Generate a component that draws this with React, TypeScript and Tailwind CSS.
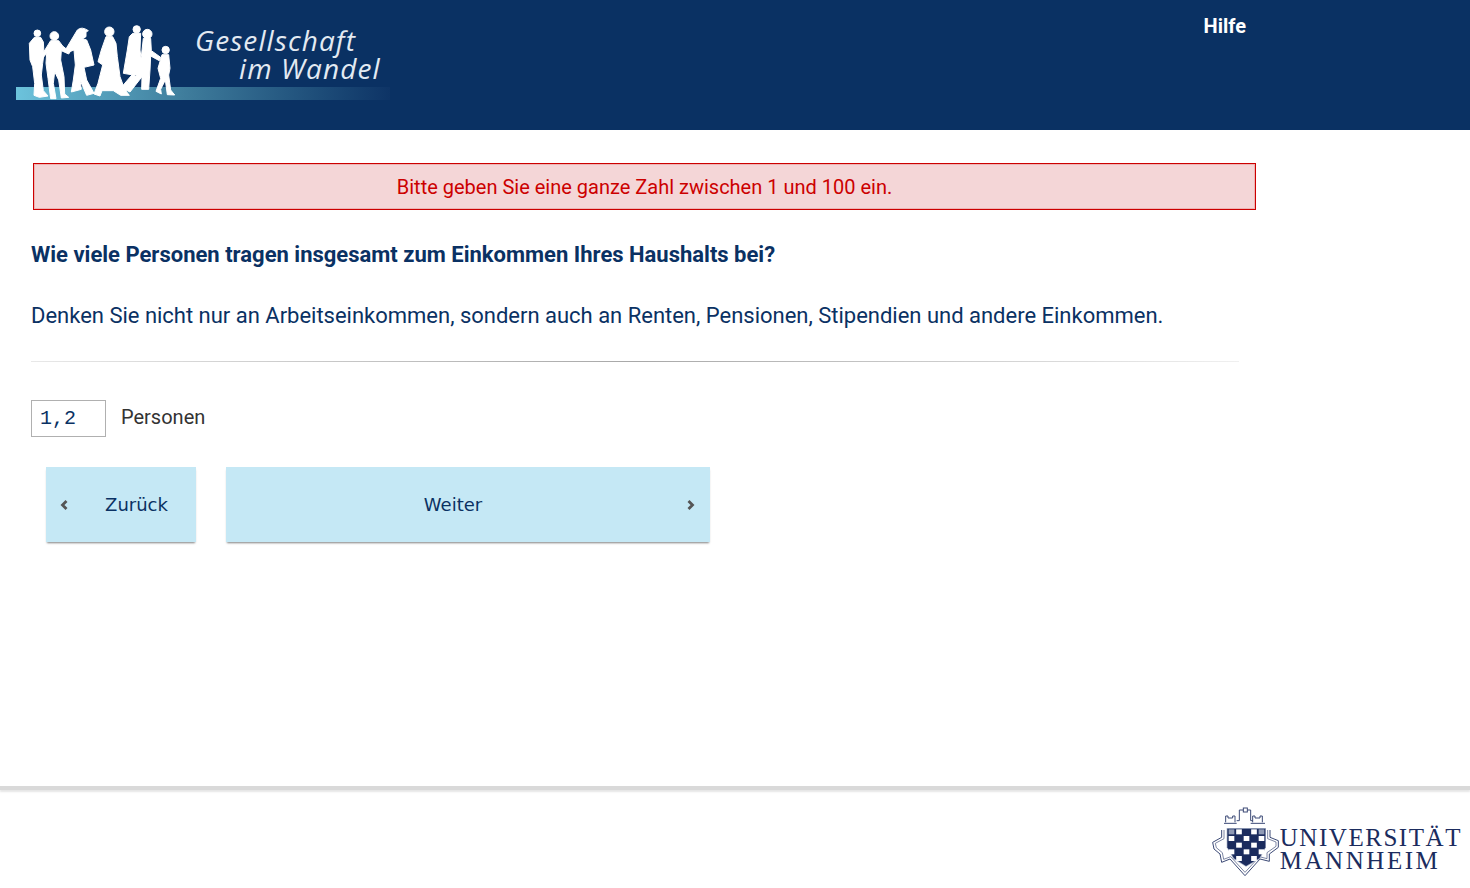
function Walkers() {
  return (
    <svg viewBox="0 0 1200 300" className="absolute left-0 top-0 w-[400px] h-[100px]">
      <g fill="#ffffff" stroke="#ffffff" strokeWidth="3" strokeLinejoin="round">
        <g transform="translate(60 60)">
          <circle cx="52" cy="40" r="10" />
          <path d="M43 52 L62 52 L70 66 L72 100 L68 130 L64 165 L70 212 L84 228 L58 232 L42 226 L44 190 L38 140 L30 120 L28 70 Z" />
          <circle cx="103" cy="48" r="13" />
          <path d="M92 62 L116 62 L128 78 L150 96 L146 102 L124 92 L122 120 L132 170 L134 222 L146 232 L124 234 L116 180 L104 155 L100 190 L108 236 L92 236 L84 175 L78 130 L80 100 L70 112 L66 104 Z" />
          <path d="M172 30 Q185 18 205 32 L198 36 L198 50 L188 56 L200 60 L212 90 L222 135 L192 142 L200 180 L222 220 L200 226 L180 180 L184 208 L154 216 L160 180 L166 135 L162 90 L142 98 L136 90 Z" />
        </g>
        <g transform="translate(270 60)">
          <circle cx="58" cy="35" r="14" />
          <path d="M48 50 L68 50 L78 70 L82 110 L90 170 L104 208 L118 226 L92 226 L70 212 L36 212 L30 228 L12 222 L24 190 L38 135 L24 125 L34 90 Z" />
          <circle cx="140" cy="28" r="11" />
          <path d="M128 40 L152 40 L150 90 L160 165 L130 165 L100 160 L112 90 L118 50 Z" />
          <path d="M130 160 L100 195 L92 215 L105 215 L140 175 Z" />
          <circle cx="172" cy="42" r="14" />
          <path d="M160 55 L182 55 L184 92 L212 112 L208 122 L182 108 L180 150 L176 208 L155 208 L156 170 L120 216 L108 210 L140 165 L154 110 Z" />
          <circle cx="227" cy="90" r="11" />
          <path d="M216 104 L236 104 L240 145 L236 165 L242 210 L254 225 L232 224 L226 180 L212 208 L214 222 L198 214 L212 175 L204 145 Z" />
        </g>
      </g>
    </svg>
  );
}

const crestCells: [number, number, string][] = [
  [0, 0, "#8f9ab5"], [1, 0, "#ffffff"], [2, 0, "#1b2c5e"], [3, 0, "#ffffff"], [4, 0, "#8f9ab5"],
  [0, 1, "#ffffff"], [1, 1, "#1b2c5e"], [2, 1, "#ffffff"], [3, 1, "#1b2c5e"], [4, 1, "#ffffff"],
  [0, 2, "#1b2c5e"], [1, 2, "#ffffff"], [2, 2, "#1b2c5e"], [3, 2, "#ffffff"], [4, 2, "#1b2c5e"],
  [0, 3, "#ffffff"], [1, 3, "#1b2c5e"], [2, 3, "#ffffff"], [3, 3, "#1b2c5e"], [4, 3, "#ffffff"],
  [1, 4, "#ffffff"], [2, 4, "#1b2c5e"], [3, 4, "#ffffff"],
];

function Crest() {
  return (
    <svg viewBox="0 0 210 225" className="w-[70px] h-[75px] shrink-0">
      <g fill="none" stroke="#3c4a76" strokeWidth="3">
        <path d="M47 55 V36 H54 V42 H68 V36 H75 V55 M42 58 H80" />
        <path d="M128 55 V36 H135 V42 H150 V36 H157 V55 M122 58 H165" />
        <path d="M80 50 H88 V18 H100 M112 18 H122 V50 H128" />
        <rect x="100" y="12" width="12" height="12" />
        <path d="M35 78 V100 L8 115 L12 135 L30 150 L35 175 L60 165 L105 215 L150 165 L178 172 L178 150 L205 130 L205 110 L180 100 V78" />
        <path d="M42 78 V104 L16 118 L19 131 L37 146 L41 166 L62 158 L105 205 L148 158 L171 164 L171 146 L198 127 L198 114 L173 104 V78" strokeWidth="2" />
      </g>
      <path d="M50 72 H168 V130 L150 165 L108 188 L70 165 L50 130 Z" fill="#a9b2c8" />
      <path d="M52 74 H166 V130 L148 163 L108 186 L72 163 L52 130 Z" fill="#1b2c5e" />
      {crestCells.map(([x, y, c]) => (
        <rect key={`${x}-${y}`} x={56 + x * 22.5} y={76 + y * 20} width="17" height="15" fill={c} />
      ))}
    </svg>
  );
}

function UmaLogo() {
  return (
    <div className="flex items-start mr-[8px] mt-[14px]">
      <Crest />
      <div className="mt-[22px] font-['Liberation_Serif',serif] text-[#1b2c5e] text-[25px] leading-[23px] whitespace-nowrap">
        <div className="tracking-[1.55px]">UNIVERSITÄT</div>
        <div className="tracking-[2.55px]">MANNHEIM</div>
      </div>
    </div>
  );
}

export default function App() {
  return (
    <div className="h-[888px] flex flex-col bg-white overflow-hidden font-['Roboto',sans-serif] text-[#0a3163]">
      <header className="h-[130px] bg-[#0a3163] flex items-start justify-between shrink-0">
        <div className="relative w-[400px] h-[130px]">
          <div className="absolute left-[16px] top-[87px] w-[374px] h-[13px] bg-gradient-to-r from-[#6cc3dc] via-[#3f7d9c] via-45% to-[#0e3466]" />
          <Walkers />
          <div className="absolute left-[195px] top-[26px] font-['Open_Sans',sans-serif] italic text-[#e3eaf2] text-[28px] leading-[28px] tracking-[1.1px] whitespace-nowrap">
            Gesellschaft
          </div>
          <div className="absolute left-[239px] top-[54px] font-['Open_Sans',sans-serif] italic text-[#e3eaf2] text-[28px] leading-[28px] tracking-[1.1px] whitespace-nowrap">
            im Wandel
          </div>
        </div>
        <a className="mr-[224px] mt-[14px] text-white text-[20px] leading-[24px] font-bold">Hilfe</a>
      </header>

      <main className="flex-1 pl-[31px]">
        <div className="ml-[2px] mt-[33px] w-[1223px] h-[47px] border border-[#cc0000] bg-[#f4d6d7] shadow-[inset_0_0_0_1px_#eeb4b4] flex items-center justify-center text-[#cc0000] text-[20px]">
          Bitte geben Sie eine ganze Zahl zwischen 1 und 100 ein.
        </div>
        <h1 className="mt-[30px] text-[22px] leading-[30px] font-bold">
          Wie viele Personen tragen insgesamt zum Einkommen Ihres Haushalts bei?
        </h1>
        <p className="mt-[31px] text-[22px] leading-[30px] tracking-[-0.01px]">
          Denken Sie nicht nur an Arbeitseinkommen, sondern auch an Renten, Pensionen, Stipendien und andere Einkommen.
        </p>
        <div className="mt-[30px] w-[1208px] h-[1px] bg-gradient-to-r from-[#e8e8e8] via-[#a8a8a8] to-[#f0f0f0]" />
        <div className="mt-[38px] flex items-center">
          <input
            readOnly
            value="1,2"
            className="w-[75px] h-[37px] border border-[#b0b0b0] bg-white px-[8px] font-['Liberation_Mono',monospace] text-[20px] text-[#0a3163] outline-none"
          />
          <span className="ml-[15px] mb-[3px] text-[20px] text-[#333333]">Personen</span>
        </div>
        <div className="mt-[30px] ml-[15px] flex gap-[30px] font-['DejaVu_Sans',sans-serif] text-[18px]">
          <button className="relative w-[150px] h-[75px] bg-[#c5e8f5] shadow-[0_2px_2px_-1px_rgba(0,0,0,0.5)] text-[#0a3163] pl-[31px] flex items-center justify-center">
            <svg viewBox="0 0 8 10" className="absolute left-[14px] top-[33px] w-[8px] h-[10px]">
              <path d="M6.5 1 L2.5 5 L6.5 9" fill="none" stroke="#555555" strokeWidth="2.8" />
            </svg>
            Zurück
          </button>
          <button className="relative w-[484px] h-[75px] bg-[#c5e8f5] shadow-[0_2px_2px_-1px_rgba(0,0,0,0.5)] text-[#0a3163] pr-[30px] flex items-center justify-center">
            Weiter
            <svg viewBox="0 0 8 10" className="absolute right-[15px] top-[33px] w-[8px] h-[10px]">
              <path d="M1.5 1 L5.5 5 L1.5 9" fill="none" stroke="#555555" strokeWidth="2.8" />
            </svg>
          </button>
        </div>
      </main>

      <footer className="h-[102px] shrink-0 flex flex-col">
        <div className="h-[4px] bg-[#d9d9d9] shadow-[0_2px_2px_rgba(0,0,0,0.1)] shrink-0" />
        <div className="flex justify-end items-start">
          <UmaLogo />
        </div>
      </footer>
    </div>
  );
}
